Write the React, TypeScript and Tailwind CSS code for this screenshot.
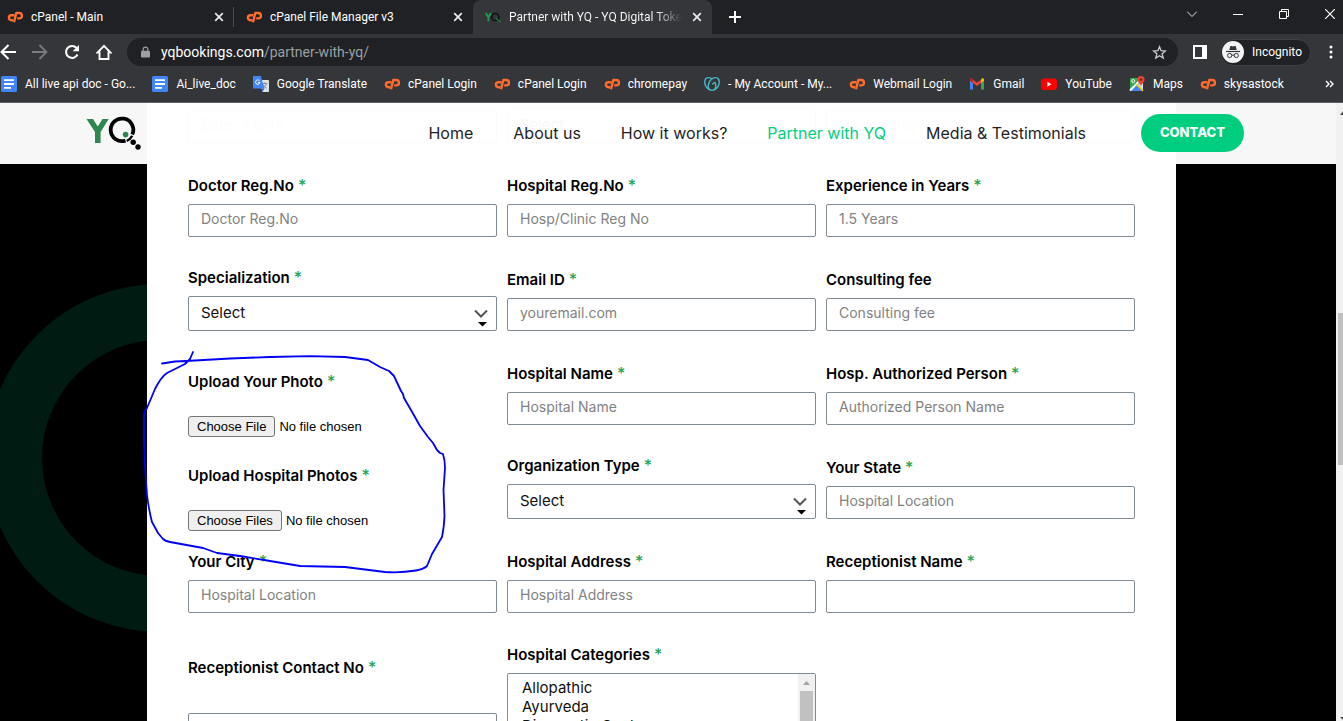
import type { ReactNode } from "react";
import { SiGodaddy } from "react-icons/si";

const CP = () => (
  <svg viewBox="0 0 16 16" className="size-4 shrink-0" fill="none" aria-hidden="true">
    <path d="M7.600 6.200H4.500a2.500 2.500 0 0 0-.2 5h1.800" stroke="#ff6c2c" strokeWidth="2.400" />
    <path d="M7 13.200 9.300 4h3a2.700 2.700 0 0 1 0 5.400h-2.100" stroke="#ff6c2c" strokeWidth="2.400" strokeLinejoin="round" />
  </svg>
);

const Docs = () => (
  <svg viewBox="0 0 16 16" className="size-4 shrink-0" aria-hidden="true">
    <rect width="16" height="16" rx="1.5" fill="#4285f4" />
    <path d="M3 4.2h10M3 8h10M3 11.8h7" stroke="#fff" strokeWidth="1.8" />
  </svg>
);

const Translate = () => (
  <svg viewBox="0 0 16 16" className="size-4 shrink-0" aria-hidden="true">
    <path d="M6 4h9a1 1 0 0 1 1 1v10a1 1 0 0 1-1 1H9.500z" fill="#dfe1e5" />
    <path d="M9 7.500h5.500M11.700 6.300v1.200M13.500 7.500c-.5 2-2 3.600-3.300 4.500M10.300 9c.8 1.500 2 2.500 3.300 3.200" stroke="#7b8794" strokeWidth="0.9" fill="none" />
    <path d="M1 0h6.800l3.700 12.500H1a1 1 0 0 1-1-1V1a1 1 0 0 1 1-1z" fill="#4285f4" />
    <path d="M8.500 12.500h3L9.500 16z" fill="#3367d6" />
    <path d="M6.500 4.700A2.200 2.200 0 1 0 7 6.400H5" stroke="#fff" strokeWidth="1" fill="none" />
  </svg>
);

const GoDaddy = () => <SiGodaddy className="size-4 shrink-0 text-[#45b7c4]" aria-hidden="true" />;

const Gmail = () => (
  <svg viewBox="0 0 16 16" className="size-4 shrink-0" aria-hidden="true">
    <path d="M1 4v9.500h3V7z" fill="#4285f4" />
    <path d="M12 7v6.500h3V4z" fill="#34a853" />
    <path d="M12 3.800V7l3-2.300V3.600c0-1.300-1.500-1.700-2.300-1z" fill="#fbbc04" />
    <path d="M4 7V3.800l4 3 4-3V7l-4 3z" fill="#ea4335" />
    <path d="M1 4.700 4 7V3.800l-.7-1.200C2.500 2 1 2.300 1 3.600z" fill="#c5221f" />
  </svg>
);

const YouTube = () => (
  <svg viewBox="0 0 16 16" className="size-4 shrink-0" aria-hidden="true">
    <rect y="2.500" width="16" height="11.500" rx="3" fill="#f00" />
    <path d="M6.400 5.800v4.900l4.100-2.450z" fill="#fff" />
  </svg>
);

const Maps = () => (
  <svg viewBox="0 0 16 16" className="size-4 shrink-0" aria-hidden="true">
    <rect x="1" y="2" width="13" height="13" rx="1" fill="#34a853" />
    <path d="M8.500 9 14 14.500V6z" fill="#dfe3e8" />
    <path d="M2 15 8 9l6 6z" fill="#4285f4" />
    <path d="M1 14.500 10 5.500" stroke="#fff" strokeWidth="2" />
    <path d="M7.500 8.500 14 15" stroke="#fbbc04" strokeWidth="1.400" />
    <circle cx="4.200" cy="5" r="1.500" fill="none" stroke="#fff" strokeWidth="0.9" />
    <path d="M12 0a3.600 3.600 0 0 1 3.600 3.600c0 2.600-2.800 3.400-3.600 7-.8-3.600-3.600-4.400-3.600-7A3.600 3.600 0 0 1 12 0z" fill="#ea4335" />
    <circle cx="12" cy="3.600" r="1.300" fill="#8c1a11" />
  </svg>
);

const Close = () => (
  <svg viewBox="0 0 10 10" className="size-[10px]" aria-hidden="true">
    <path d="M1.200 1.200 8.800 8.800M8.800 1.200 1.200 8.800" stroke="#e8eaed" strokeWidth="1.700" />
  </svg>
);

const YqFavicon = () => (
  <svg viewBox="0 0 16 16" className="size-4 shrink-0" fill="none" aria-hidden="true">
    <path d="M.8 4l2.600 4.200L6 4M3.400 8v4.500" stroke="#1f9d4d" strokeWidth="1.800" />
    <circle cx="10.300" cy="8" r="3.600" stroke="#0c0d0e" strokeWidth="1.500" />
    <path d="M11 9.500l4.500 3.500" stroke="#1f7d45" strokeWidth="1.400" />
  </svg>
);

const YqLogo = () => (
  <svg viewBox="0 0 56 36" className="h-9 w-14" fill="none" aria-hidden="true">
    <path d="M0.500 3h6.500l4.800 7.600L16.500 3h6.200l-8.100 13v11H9V16z" fill="#2e8650" />
    <path d="M46.300 18.500A11.300 11.300 0 1 0 39.500 24.600" stroke="#000" strokeWidth="3.800" />
    <path d="M40.800 25A11.800 11.800 0 0 0 46.200 19.800" stroke="#000" strokeWidth="2.400" />
    <circle cx="39.600" cy="18.600" r="2.800" fill="#2e8650" />
    <circle cx="47.200" cy="26.300" r="2.700" fill="#000" />
    <circle cx="52" cy="31" r="2.700" fill="#000" />
  </svg>
);

function Tab({ icon, title, active = false, divider = false }: { icon: ReactNode; title: string; active?: boolean; divider?: boolean }) {
  return (
    <div
      role="tab"
      aria-selected={active}
      className={
        active
          ? "flex h-[34px] w-[239px] items-center gap-2 rounded-t-lg bg-[#35363a] pr-[7px] pl-3"
          : "relative flex h-[34px] w-[239px] items-center gap-2 pr-[7px] pl-3"
      }
    >
      {icon}
      <span className={active ? "flex-1 bg-gradient-to-r from-white from-85% to-[#35363a] bg-clip-text whitespace-nowrap text-transparent" : "flex-1 whitespace-nowrap text-white"}>
        {title}
      </span>
      <button type="button" aria-label={`Close ${title}`} className="flex size-4 items-center justify-center">
        <Close />
      </button>
      {divider && <span className="absolute top-[7px] right-0 h-5 w-px bg-[#4a4c50]" />}
    </div>
  );
}

const bookmarks: { label: string; icon: ReactNode }[] = [
  { label: "All live api doc - Go...", icon: <Docs /> },
  { label: "Ai_live_doc", icon: <Docs /> },
  { label: "Google Translate", icon: <Translate /> },
  { label: "cPanel Login", icon: <CP /> },
  { label: "cPanel Login", icon: <CP /> },
  { label: "chromepay", icon: <CP /> },
  { label: "- My Account - My...", icon: <GoDaddy /> },
  { label: "Webmail Login", icon: <CP /> },
  { label: "Gmail", icon: <Gmail /> },
  { label: "YouTube", icon: <YouTube /> },
  { label: "Maps", icon: <Maps /> },
  { label: "skysastock", icon: <CP /> },
];

function BrowserChrome() {
  return (
    <div className="relative z-20 shrink-0 border-b border-[#5f6064] bg-[#35363a] font-['Roboto',sans-serif] text-xs text-white">
      <div className="flex h-[34px] items-center bg-[#202124]">
        <div role="tablist" className="-ml-[5px] flex">
          <Tab icon={<CP />} title="cPanel - Main" divider />
          <Tab icon={<CP />} title="cPanel File Manager v3" />
          <Tab icon={<YqFavicon />} title="Partner with YQ - YQ Digital Toke" active />
        </div>
        <button type="button" aria-label="New tab" className="ml-[17px]">
          <svg viewBox="0 0 12 12" className="size-3"><path d="M6 0v12M0 6h12" stroke="#fff" strokeWidth="2" /></svg>
        </button>
        <div className="mb-[6px] ml-auto flex items-center gap-9 pr-2">
          <button type="button" aria-label="Search tabs">
            <svg viewBox="0 0 10 10" className="size-[10px]" fill="none"><path d="M0 2.500l5 5 5-5" stroke="#ddd" /></svg>
          </button>
          <button type="button" aria-label="Minimize">
            <svg viewBox="0 0 10 10" className="size-[10px]"><path d="M0 5.500h10" stroke="#fff" /></svg>
          </button>
          <button type="button" aria-label="Restore">
            <svg viewBox="0 0 10 10" className="size-[10px]" fill="none"><path d="M.5 2.500h7v7h-7zM2.500 2.500v-2h7v7h-2" stroke="#fff" /></svg>
          </button>
          <button type="button" aria-label="Close window">
            <svg viewBox="0 0 10 10" className="size-[10px]"><path d="M0 0l10 10M10 0L0 10" stroke="#fff" strokeWidth="1.200" /></svg>
          </button>
        </div>
      </div>
      <div className="flex h-9 items-center pr-[10px]">
        <div className="flex items-center gap-4">
          <button type="button" aria-label="Back">
            <svg viewBox="0 0 16 16" className="size-4" fill="none"><path d="M16 8H2M8.500 1 1.500 8l7 7" stroke="#fff" strokeWidth="2" /></svg>
          </button>
          <button type="button" aria-label="Forward" disabled>
            <svg viewBox="0 0 16 16" className="size-4" fill="none"><path d="M0 8h14M7.500 1l7 7-7 7" stroke="#797b7f" strokeWidth="1.800" /></svg>
          </button>
          <button type="button" aria-label="Reload">
            <svg viewBox="0 0 16 16" className="size-4" fill="none">
              <path d="M13.500 10.500A6 6 0 1 1 12.600 4" stroke="#fff" strokeWidth="2" />
              <path d="M15 1v6.300H8.700z" fill="#fff" />
            </svg>
          </button>
          <button type="button" aria-label="Home">
            <svg viewBox="0 0 16 16" className="size-4" fill="none"><path d="M3.500 15V8.500H1.500L8 1.800l6.500 6.700h-2V15z" stroke="#fff" strokeWidth="1.900" /></svg>
          </button>
        </div>
        <div className="ml-[15px] flex h-7 flex-1 items-center rounded-full bg-[#202124] pr-[11px] pl-[14px] text-sm">
          <svg viewBox="0 0 10 12" className="h-3 w-[9px]" fill="none" aria-hidden="true">
            <rect y="4.500" width="10" height="7.500" rx="1" fill="#9aa0a6" />
            <path d="M2.400 5V3.200a2.600 2.600 0 0 1 5.200 0V5" stroke="#9aa0a6" strokeWidth="1.300" />
          </svg>
          <span className="ml-[11px] flex-1 text-[#9aa0a6]">
            <span className="text-white">yqbookings.com</span>/partner-with-yq/
          </span>
          <button type="button" aria-label="Bookmark this tab">
            <svg viewBox="0 0 16 16" className="size-[15px]" fill="none">
              <path d="M8 1.800l1.700 4.300 4.700.3-3.600 3 1.200 4.500L8 11.400l-4 2.500 1.200-4.500-3.600-3 4.700-.3z" stroke="#c9cbcf" strokeWidth="1.400" />
            </svg>
          </button>
        </div>
        <button type="button" aria-label="Side panel" className="ml-[15px]">
          <svg viewBox="0 0 14 14" className="size-[14px]"><path d="M0 0h14v14H0zM2 2v10h7V2z" fill="#fff" fillRule="evenodd" /></svg>
        </button>
        <div className="ml-[13px] flex h-[27px] items-center gap-2 rounded-full border border-[#3f4144] bg-[#202124] pr-2 pl-px">
          <svg viewBox="0 0 22 22" className="size-[22px]" fill="none" aria-hidden="true">
            <circle cx="11" cy="11" r="11" fill="#f1f3f4" />
            <path d="M7.300 9l1-4h1.200l1.500.5 1.500-.5h1.200l1 4z" fill="#35363a" />
            <path d="M4 10.500h14" stroke="#35363a" strokeWidth="1.200" />
            <circle cx="7.700" cy="14.500" r="2.100" stroke="#35363a" />
            <circle cx="14.300" cy="14.500" r="2.100" stroke="#35363a" />
            <path d="M9.800 14.300q1.200-.8 2.400 0" stroke="#35363a" />
          </svg>
          Incognito
        </div>
        <button type="button" aria-label="Browser menu" className="ml-[18px]">
          <svg viewBox="0 0 4 14" className="h-[14px] w-1" fill="#fff"><circle cx="2" cy="2" r="1.500" /><circle cx="2" cy="7" r="1.500" /><circle cx="2" cy="12" r="1.500" /></svg>
        </button>
      </div>
      <div className="flex h-8 items-center pb-1 pl-px">
        <div className="flex gap-[17px]">
          {bookmarks.map((b, i) => (
            <a key={i} href="#" className="flex items-center gap-2 whitespace-nowrap">
              {b.icon}
              {b.label}
            </a>
          ))}
        </div>
        <button type="button" aria-label="More bookmarks" className="mr-[9px] ml-auto">
          <svg viewBox="0 0 9 8" className="h-2 w-[9px]" fill="none"><path d="M1 1l3 3-3 3M5 1l3 3-3 3" stroke="#fff" strokeWidth="1.400" /></svg>
        </button>
      </div>
    </div>
  );
}

const box = "w-full rounded-xs border border-[#818a91] bg-white px-3 text-[#111]";

function Label({ id, text, required = true }: { id: string; text: string; required?: boolean }) {
  return (
    <label htmlFor={id} className="block h-4 text-[15px] leading-4 font-semibold text-black">
      {text}
      {required && <span className="ml-1 text-base leading-[0] font-medium text-[#23a455]">*</span>}
    </label>
  );
}

function TextField({ id, label, placeholder, required = true }: { id: string; label: string; placeholder?: string; required?: boolean }) {
  return (
    <div>
      <Label id={id} text={label} required={required} />
      <input id={id} type="text" placeholder={placeholder} className={`${box} mt-[10px] block h-[33px] pb-1 text-sm placeholder:text-[#828282]`} />
    </div>
  );
}

function SelectField({ id, label }: { id: string; label: string }) {
  return (
    <div>
      <Label id={id} text={label} />
      <div className="relative mt-[10px]">
        <select id={id} className={`${box} block h-[35px] appearance-none text-[15px]`}>
          <option>Select</option>
        </select>
        <svg viewBox="0 0 16 20" className="pointer-events-none absolute top-3 right-2 h-5 w-4" fill="none" aria-hidden="true">
          <path d="M2 2.500l6 6 6-6" stroke="#555" strokeWidth="2" />
          <path d="M5 14h9l-4.500 4.500z" fill="#000" />
        </svg>
      </div>
    </div>
  );
}

function FileField({ id, label, multiple = false }: { id: string; label: string; multiple?: boolean }) {
  return (
    <div className="self-start pt-[43px]">
      <Label id={id} text={label} />
      <input
        id={id}
        type="file"
        multiple={multiple}
        className="mt-[26px] block h-[21px] w-full font-['Liberation_Sans',Arial,sans-serif] text-[13px] leading-[19px] text-black file:mr-1 file:h-[21px] file:rounded-[3px] file:border file:border-[#767676] file:bg-[#efefef] file:px-2"
      />
    </div>
  );
}

const categories = ["Allopathic", "Ayurveda", "Diagnostic Center", "Dental", "Homeopathy"];

function FormRow({ children }: { children: ReactNode }) {
  return <div className="grid grid-cols-3 grid-rows-[94px] items-end gap-x-[10px]">{children}</div>;
}

const navLinks = ["Home", "About us", "How it works?", "Partner with YQ", "Media & Testimonials"];

function SiteHeader() {
  return (
    <header className="absolute inset-x-0 top-0 z-10 flex h-[61px] items-center bg-white/97 pr-[92px] pb-[2px] pl-[86px]">
      <a href="#" aria-label="YQ home" className="pt-[2px]">
        <YqLogo />
      </a>
      <nav className="ml-auto flex items-center gap-10 text-base text-[#1f1f1f]">
        {navLinks.map((l) => (
          <a key={l} href="#" className={l === "Partner with YQ" ? "text-[#00ce7f]" : ""}>
            {l}
          </a>
        ))}
      </nav>
      <button type="button" className="ml-[55px] h-[38px] w-[103px] rounded-full bg-[#00ce7f] text-[13px] font-extrabold text-white">
        CONTACT
      </button>
    </header>
  );
}

export default function App() {
  return (
    <div className="relative flex h-screen flex-col overflow-hidden font-['Inter',sans-serif]">
      <BrowserChrome />
      <div className="flex min-h-0 flex-1">
        <main className="relative min-w-0 flex-1 overflow-hidden bg-black">
          <svg viewBox="0 0 348 348" className="absolute top-[181px] -left-[14px] size-[348px]" fill="none" aria-hidden="true">
            <circle cx="174" cy="174" r="146" stroke="#001b12" strokeWidth="56" />
          </svg>
          <SiteHeader />
          <form className="relative mr-[160px] ml-[147px] min-h-full bg-white px-[41px]">
            <div className="grid h-10 grid-cols-3 items-end gap-x-[10px]">
              <input aria-label="Date of Birth" placeholder="Date of Birth" className={`${box} h-[33px] pb-1 text-sm`} />
              <select aria-label="Gender" className={`${box} h-[35px] appearance-none text-[15px]`}>
                <option>Select</option>
              </select>
              <input aria-label="Qualification" placeholder="Qualification" className={`${box} h-[33px] pb-1 text-sm`} />
            </div>
            <FormRow>
              <TextField id="doctor-reg" label="Doctor Reg.No" placeholder="Doctor Reg.No" />
              <TextField id="hospital-reg" label="Hospital Reg.No" placeholder="Hosp/Clinic Reg No" />
              <TextField id="experience" label="Experience in Years" placeholder="1.5 Years" />
            </FormRow>
            <FormRow>
              <SelectField id="specialization" label="Specialization" />
              <TextField id="email" label="Email ID" placeholder="youremail.com" />
              <TextField id="fee" label="Consulting fee" placeholder="Consulting fee" required={false} />
            </FormRow>
            <FormRow>
              <FileField id="photo" label="Upload Your Photo" />
              <TextField id="hospital-name" label="Hospital Name" placeholder="Hospital Name" />
              <TextField id="authorized" label="Hosp. Authorized Person" placeholder="Authorized Person Name" />
            </FormRow>
            <FormRow>
              <FileField id="hospital-photos" label="Upload Hospital Photos" multiple />
              <SelectField id="org-type" label="Organization Type" />
              <TextField id="state" label="Your State" placeholder="Hospital Location" />
            </FormRow>
            <FormRow>
              <TextField id="city" label="Your City" placeholder="Hospital Location" />
              <TextField id="address" label="Hospital Address" placeholder="Hospital Address" />
              <TextField id="receptionist" label="Receptionist Name" />
            </FormRow>
            <div className="grid grid-cols-3 items-start gap-x-[10px]">
              <div className="pt-[47px]">
                <Label id="receptionist-contact" text="Receptionist Contact No" />
                <input id="receptionist-contact" type="tel" className={`${box} mt-[37px] block h-[33px] text-sm`} />
              </div>
              <div className="pt-[34px]">
                <Label id="categories" text="Hospital Categories" />
                <div className="mt-[10px] flex h-24 rounded-xs border border-[#818a91]">
                  <select id="categories" multiple className="h-full min-w-0 flex-1 overflow-hidden pt-1 pl-3 text-[15px] leading-[19px] text-[#111]">
                    {categories.map((c) => (
                      <option key={c} className="h-[19px] px-[2px] py-0">
                        {c}
                      </option>
                    ))}
                  </select>
                  <div className="flex w-[17px] flex-col items-center bg-[#f1f1f1]" aria-hidden="true">
                    <svg viewBox="0 0 17 17" className="size-[17px]"><path d="M5 11h7L8.500 7z" fill="#a3a3a3" /></svg>
                    <div className="w-[13px] flex-1 bg-[#c1c1c1]" />
                  </div>
                </div>
              </div>
            </div>
          </form>
        </main>
        <div className="flex w-[7px] flex-col items-end bg-[#f1f1f1]" aria-hidden="true">
          <svg viewBox="0 0 3 7" className="mt-[7px] h-[7px] w-[3px]"><path d="M3 1v4H0z" fill="#505050" /></svg>
          <div className="mt-[196px] h-[152px] w-[5px] bg-[#c1c1c1]" />
          <svg viewBox="0 0 3 4" className="mt-auto h-1 w-[3px]"><path d="M0 0h3v3z" fill="#505050" /></svg>
        </div>
      </div>
      <svg viewBox="0 0 310 230" className="pointer-events-none absolute top-[348px] left-[140px] z-30 h-[230px] w-[310px]" fill="none" aria-hidden="true">
        <path
          d="M22 15.500L35 13.500 46 13 90 10.500 130 9 170 8.200 205 9 228 12 240 19 249 23 254 28 261 43 263 46 264 50 271 62 280 78 288 89 293 95 297 102 300 105 303 106Q305 112 305 120L303.500 142 304.500 168Q304 180 302 189L292 206 287 218Q284 221 276 222.500 261 225 245 224L205 219 160 218 130 213 100 208 77 205 63 200 30 194Q25 193 23 191L18 185 12 174Q9 163 7 147L5 119 4 92 4 68Q4 63 7 60L15 41Q21 29 27 25L35 21 45 16 50 11 53 4"
          stroke="#0000f5"
          strokeWidth="1.800"
          strokeLinecap="round"
          strokeLinejoin="round"
        />
      </svg>
    </div>
  );
}
